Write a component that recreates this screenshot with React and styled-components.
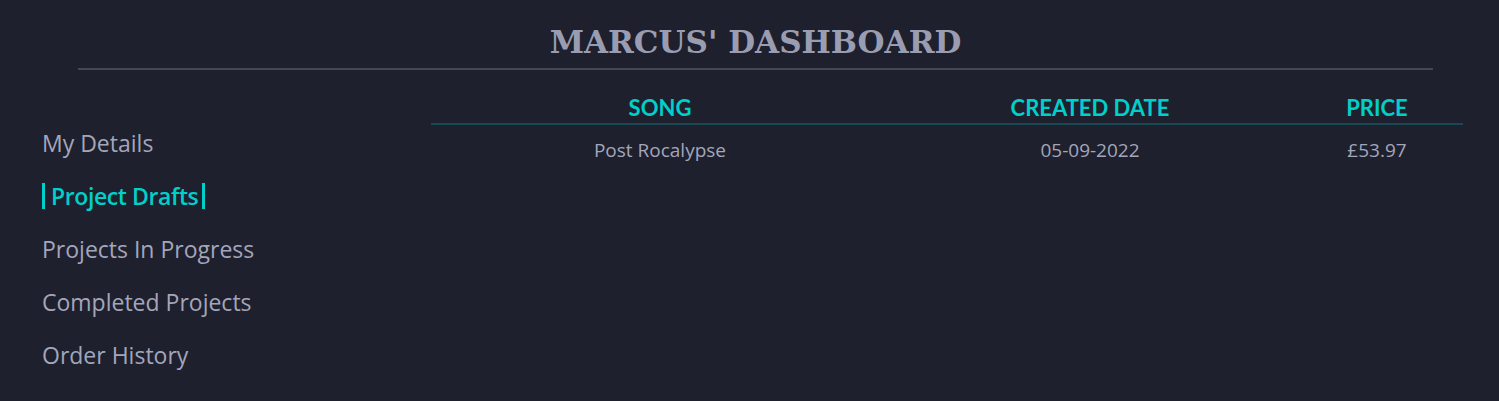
import React from 'react';
import styled, { createGlobalStyle } from "styled-components";

const GlobalStyle = createGlobalStyle`
    body{
        margin: 0;
        background: #1e202d;
        font-family: "Open Sans", "Noto Sans", sans-serif;
    }
`;

const menu = ["My Details", "Project Drafts", "Projects In Progress", "Completed Projects", "Order History"];

const drafts = [
    { id: 1, song: "Post Rocalypse", created: "05-09-2022", price: "£53.97" },
];

const App = () => {
    return(
        <>
        <GlobalStyle />
        <Page>
            <Header>
                <Title>MARCUS' DASHBOARD</Title>
            </Header>
            <Main>
                <Sidebar>
                    {menu.map((item) =>(
                        <MenuItem key={item}>
                            <MenuLink active={item === "Project Drafts"}>{item}</MenuLink>
                        </MenuItem>
                    ))}
                </Sidebar>
                <Table>
                    <thead>
                        <tr>
                            <Th>SONG</Th>
                            <Th>CREATED DATE</Th>
                            <Th>PRICE</Th>
                        </tr>
                    </thead>
                    <tbody>
                        {drafts.map((d) =>(
                            <tr key={d.id}>
                                <Td>{d.song}</Td>
                                <Td>{d.created}</Td>
                                <Td>{d.price}</Td>
                            </tr>
                        ))}
                    </tbody>
                </Table>
            </Main>
        </Page>
        </>
    )
}

const Page = styled.div`
    min-height: 401px;
`;

const Header = styled.header`
    margin: 0 66px 0 78px;
    padding-top: 24px;
    padding-bottom: 8px;
    border-bottom: 2px solid #454755;
    text-align: center;
`;

const Title = styled.h1`
    margin: 0;
    font-family: "DejaVu Serif", serif;
    font-weight: bold;
    font-size: 31px;
    line-height: 36px;
    color: #9a9db2;
`;

const Main = styled.div`
    display: flex;
    align-items: flex-start;
    padding-top: 24px;
`;

const Sidebar = styled.ul`
    list-style: none;
    margin: 0;
    padding: 22px 0 0 42px;
    width: 389px;
`;

const MenuItem = styled.li`
    height: 53px;
    display: flex;
    align-items: center;
`;

const MenuLink = styled.span`
    font-size: 23px;
    line-height: 26px;
    color: ${(p) => p.active ? "#00cfca" : "#a3a6bb"};
    font-weight: ${(p) => p.active ? 600 : 400};
    letter-spacing: ${(p) => p.active ? "-0.4px" : "0"};
    border-left: ${(p) => p.active ? "3px solid #00cfca" : "none"};
    border-right: ${(p) => p.active ? "3px solid #00cfca" : "none"};
    padding: ${(p) => p.active ? "0 4px 0 6px" : "0"};
`;

const Table = styled.table`
    flex: 1;
    margin-right: 36px;
    border-collapse: collapse;
`;

const Th = styled.th`
    font-family: "Lato", sans-serif;
    font-size: 22px;
    font-weight: 700;
    color: #00cfca;
    padding: 0 0 2px;
    border-bottom: 2px solid #184a55;
    &:nth-child(1){ width: 458px; }
    &:nth-child(2){ width: 402px; }
`;

const Td = styled.td`
    text-align: center;
    font-size: 19px;
    color: #a3a6bb;
    padding: 12px 0;
`;

export default App;
